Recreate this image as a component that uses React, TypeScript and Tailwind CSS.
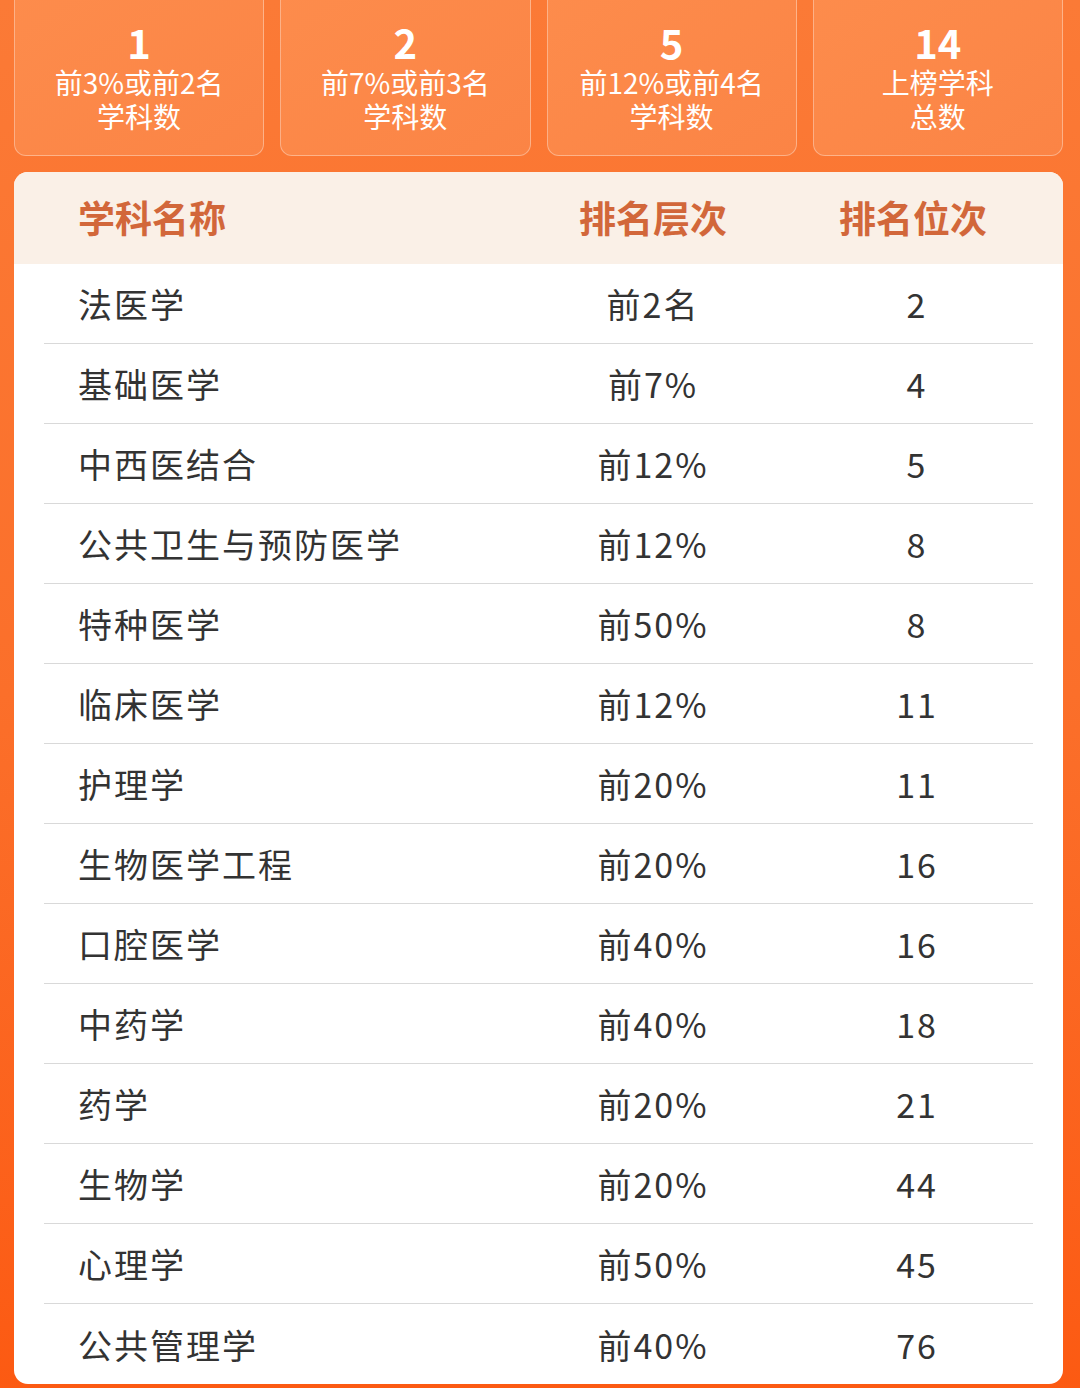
import React from "react";

interface Stat {
  value: string;
  lines: string[];
}

interface Row {
  name: string;
  tier: string;
  rank: string;
}

const stats: Stat[] = [
  { value: "1", lines: ["前3%或前2名", "学科数"] },
  { value: "2", lines: ["前7%或前3名", "学科数"] },
  { value: "5", lines: ["前12%或前4名", "学科数"] },
  { value: "14", lines: ["上榜学科", "总数"] },
];

const rows: Row[] = [
  { name: "法医学", tier: "前2名", rank: "2" },
  { name: "基础医学", tier: "前7%", rank: "4" },
  { name: "中西医结合", tier: "前12%", rank: "5" },
  { name: "公共卫生与预防医学", tier: "前12%", rank: "8" },
  { name: "特种医学", tier: "前50%", rank: "8" },
  { name: "临床医学", tier: "前12%", rank: "11" },
  { name: "护理学", tier: "前20%", rank: "11" },
  { name: "生物医学工程", tier: "前20%", rank: "16" },
  { name: "口腔医学", tier: "前40%", rank: "16" },
  { name: "中药学", tier: "前40%", rank: "18" },
  { name: "药学", tier: "前20%", rank: "21" },
  { name: "生物学", tier: "前20%", rank: "44" },
  { name: "心理学", tier: "前50%", rank: "45" },
  { name: "公共管理学", tier: "前40%", rank: "76" },
];

const font = {
  fontFamily: '"Noto Sans CJK SC", "Noto Sans", sans-serif',
};

export default function App() {
  return (
    <div
      className="w-[1080px] h-[1388px] overflow-hidden bg-gradient-to-b from-[#fb7a36] via-[#fb6f2a] to-[#fc5a12] pl-[14px] pr-[17px]"
      style={font}
    >
      {/* Stat cards */}
      <div className="grid grid-cols-4 gap-[16px] -mt-[12px]">
        {stats.map((s) => (
          <div
            key={s.value}
            className="h-[168px] rounded-[12px] border border-white/35 bg-gradient-to-br from-[#fd8c4c] to-[#fb8445] flex flex-col items-center pt-[30px] text-white"
          >
            <div className="text-[40px] font-bold leading-[46px]">{s.value}</div>
            <div className="text-[28px] leading-[34px] text-center">
              {s.lines.map((l) => (
                <div key={l}>{l}</div>
              ))}
            </div>
          </div>
        ))}
      </div>

      {/* Ranking table */}
      <div className="mt-[16px] rounded-[14px] bg-white overflow-hidden">
        <div className="h-[92px] bg-[#faf0e7] flex items-center text-[#d2673a] text-[37px] font-bold pl-[64px] pr-[29px]">
          <div className="flex-1">学科名称</div>
          <div className="w-[278px] text-center">排名层次</div>
          <div className="w-[242px] text-center">排名位次</div>
        </div>
        <div className="px-[30px]">
          {rows.map((r, i) => (
            <div
              key={r.name}
              className={
                "h-[80px] flex items-center text-[#333333] text-[34px] tracking-[2px] pl-[34px] " +
                (i === rows.length - 1 ? "" : "border-b border-[#d9d9d9]")
              }
            >
              <div className="flex-1">{r.name}</div>
              <div className="w-[296px] text-center">{r.tier}</div>
              <div className="w-[232px] text-center">{r.rank}</div>
            </div>
          ))}
        </div>
      </div>
    </div>
  );
}
